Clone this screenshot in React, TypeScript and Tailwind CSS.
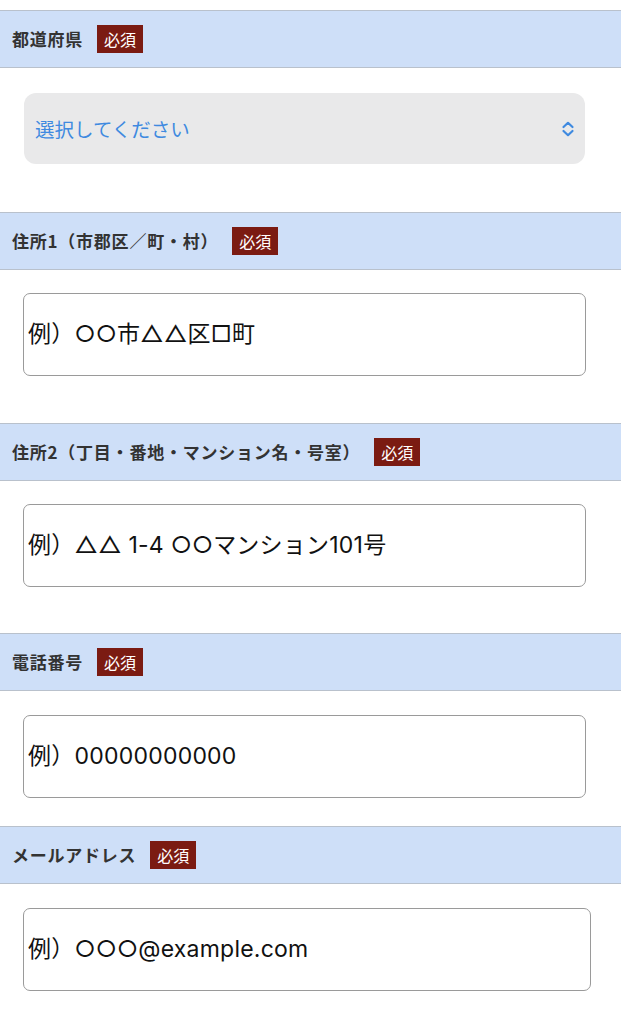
import React from 'react'

const font = { fontFamily: '"Hiragino Sans", "Noto Sans CJK JP", sans-serif' }
const inputFont = { fontFamily: 'Inter, "DejaVu Sans", "Noto Sans CJK JP", sans-serif' }

const Badge = () => (
  <span className="inline-flex h-[28px] items-center bg-[#7b1b12] px-[7px] text-[16px] leading-none text-white">
    必須
  </span>
)

const Header = ({ label }: { label: string }) => (
  <div className="flex h-[58px] items-center gap-[14px] border-y border-[#b9c1cc] bg-[#cedff8] pl-[12px]">
    <span className="text-[17px] font-bold tracking-[0.045em] text-[#333]">{label}</span>
    <Badge />
  </div>
)

const TextBox = ({ placeholder, wide }: { placeholder: string; wide?: boolean }) => (
  <div
    className={`ml-[23px] flex h-[83px] items-center rounded-[7px] border border-[#9a9a9a] bg-white pl-[4px] ${
      wide ? 'w-[568px]' : 'w-[563px]'
    }`}
  >
    <span className="text-[23px] tracking-[0.01em] text-[#111]" style={inputFont}>
      {placeholder}
    </span>
  </div>
)

const fields = [
  { label: '住所1（市郡区／町・村）', placeholder: '例）○○市△△区□町', pad: 'pt-[23px] pb-[47px]' },
  { label: '住所2（丁目・番地・マンション名・号室）', placeholder: '例）△△ 1-4 ○○マンション101号', pad: 'pt-[23px] pb-[46px]' },
  { label: '電話番号', placeholder: '例）00000000000', pad: 'pt-[24px] pb-[28px]' },
  { label: 'メールアドレス', placeholder: '例）○○○@example.com', pad: 'pt-[24px] pb-[40px]', wide: true },
]

export default function App() {
  return (
    <div className="min-h-[1024px] bg-white pt-[10px]" style={font}>
      <section>
        <Header label="都道府県" />
        <div className="pt-[25px] pb-[48px]">
          <div className="ml-[24px] flex h-[71px] w-[561px] items-center justify-between rounded-[12px] bg-[#e9e9ea] pl-[11px] pr-[10px]">
            <span className="text-[19.5px] text-[#3f8ae0]">選択してください</span>
            <svg width="14" height="16" viewBox="0 0 14 16" fill="none" stroke="#3f8ae0" strokeWidth="2.2" strokeLinecap="round" strokeLinejoin="round">
              <path d="M2.5 6 L7 1.8 L11.5 6" />
              <path d="M2.5 10 L7 14.2 L11.5 10" />
            </svg>
          </div>
        </div>
      </section>
      {fields.map((f) => (
        <section key={f.label}>
          <Header label={f.label} />
          <div className={f.pad}>
            <TextBox placeholder={f.placeholder} wide={f.wide} />
          </div>
        </section>
      ))}
    </div>
  )
}
